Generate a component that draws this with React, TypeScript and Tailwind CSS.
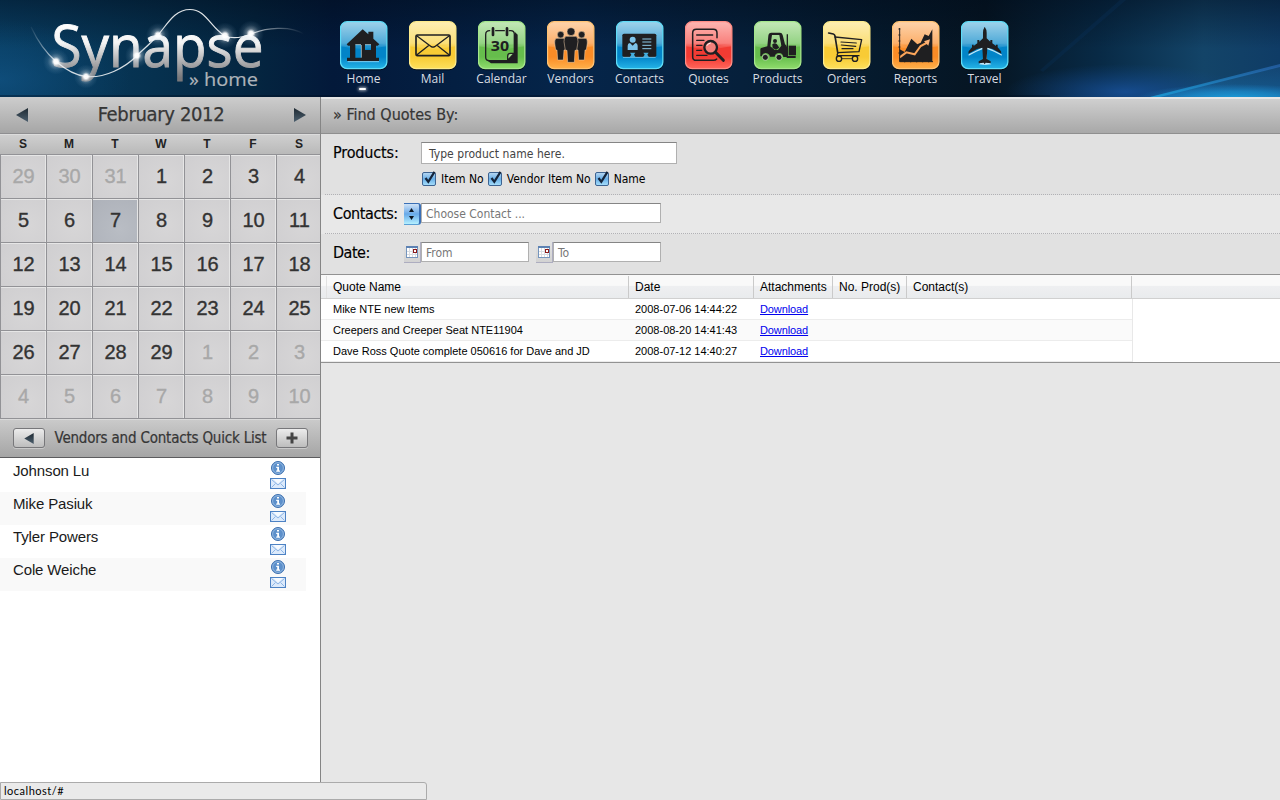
import React from "react";

const INK = "#1f1f21";

type Tone = "blue" | "yellow" | "green" | "orange" | "red";

const TONES: Record<Tone, { edge: string; top: string; mid: string; low: string; end: string }> = {
  blue: { edge: "#5fdcf7", top: "#9fd2ea", mid: "#4faad8", low: "#0284c8", end: "#25b4e6" },
  yellow: { edge: "#fdeb8c", top: "#fdeeb4", mid: "#fbdf78", low: "#f8cb35", end: "#fde05c" },
  green: { edge: "#a5e68c", top: "#c4e8b8", mid: "#94d384", low: "#66bd4c", end: "#8fdc6c" },
  orange: { edge: "#ffc374", top: "#fdd3ab", mid: "#fcb06c", low: "#fb8c26", end: "#ffb04a" },
  red: { edge: "#ff8d86", top: "#fdb6b2", mid: "#f9807c", low: "#f23b33", end: "#ff655a" },
};

function Tile({ tone, x0, children }: { tone: Tone; x0: number; children: React.ReactNode }) {
  const t = TONES[tone];
  const id = "tile" + x0;
  return (
    <svg width="48" height="50" viewBox="0 0 144 150" className="ml-[11px] block">
      <defs>
        <linearGradient id={id} x1="0" y1="0" x2="0" y2="1">
          <stop offset="0" stopColor={t.top} />
          <stop offset="0.46" stopColor={t.mid} />
          <stop offset="0.54" stopColor={t.low} />
          <stop offset="0.75" stopColor={t.low} />
          <stop offset="1" stopColor={t.end} />
        </linearGradient>
      </defs>
      <rect x="1" y="4" width="141" height="144" rx="22" fill="#000" opacity=".6" />
      <rect x="1.5" y="2" width="139" height="141" rx="20" fill={`url(#${id})`} stroke={t.edge} strokeWidth="4" />
      <path d="M4 68Q71 84 138 68L138 76Q71 92 4 76Z" fill={t.mid} opacity=".35" />
      <g transform={`translate(${-x0} -34)`} fill={INK}>
        {children}
      </g>
    </svg>
  );
}

const line = { fill: "none", stroke: INK, strokeLinecap: "round" as const, strokeLinejoin: "round" as const };

const NAV: { label: string; tone: Tone; x0: number; active?: boolean; art: React.ReactNode }[] = [
  {
    label: "Home", tone: "blue", x0: 30, active: true,
    art: (
      <>
        <path d="M53 156H147" stroke="#b9e6f8" strokeWidth="2" />
        <path fillRule="evenodd" d="M98 59L115 74V66H130V87L148 104L143 108H138V144H147V154H51V144H60V108H54L50 104ZM76 105V144H93V105ZM105 105V121H123V105Z" />
        <path d="M76 105H93M105 105H123M94 106V144" stroke="#d6f1fc" strokeWidth="2" fill="none" />
      </>
    ),
  },
  {
    label: "Mail", tone: "yellow", x0: 236,
    art: (
      <g {...line} strokeWidth="5">
        <rect x="257" y="76" width="102" height="62" rx="4" />
        <path d="M260 79L303 111Q308 114 313 111L356 79M260 135L296 107M356 135L320 107" strokeWidth="4" />
      </g>
    ),
  },
  {
    label: "Calendar", tone: "green", x0: 443,
    art: (
      <>
        <path d="M553 66L562 75V161H482L468 151H530L553 130Z" />
        <path {...line} strokeWidth="4" d="M478 63Q466 63 466 75V143Q466 153 477 153H532L552 132V74Q552 63 541 63H537M496 63H522" />
        <path d="M552 131H540Q532 131 532 140V152Z" fill="#9fd98b" stroke={INK} strokeWidth="4" />
        <path {...line} strokeWidth="8" d="M488 56V76M530 56V76" />
        <text x="509" y="124" textAnchor="middle" fontFamily="'Open Sans', 'Noto Sans', sans-serif" fontWeight="700" fontSize="43" textLength="55" lengthAdjust="spacingAndGlyphs">30</text>
      </>
    ),
  },
  {
    label: "Vendors", tone: "orange", x0: 19,
    art: (
      <g stroke="#f8d7ae" strokeWidth="1.5">
        <circle cx="60" cy="75" r="10" />
        <path d="M48 86H72Q78 88 77 100L74 121H70L68 151H51L49 121H45L42 100Q41 88 48 86Z" />
        <circle cx="123" cy="75" r="10" />
        <path d="M111 86H135Q141 88 140 100L137 121H133L131 151H114L112 121H108L105 100Q104 88 111 86Z" />
        <circle cx="91" cy="66" r="12" />
        <path d="M77 80H105Q113 82 112 96L108 122H103L101 158H81L79 122H74L70 96Q69 82 77 80Z" />
      </g>
    ),
  },
  {
    label: "Contacts", tone: "blue", x0: 227,
    art: (
      <>
        <rect x="246" y="72" width="102" height="70" rx="5" />
        <path d="M248 143H346" stroke="#a8dcf3" strokeWidth="2" />
        <g fill="#7ec4ea">
          <circle cx="277" cy="90" r="9" />
          <path d="M262 121V108Q262 101 269 100L277 108L285 100Q292 101 292 108V121Z" />
        </g>
        <path fill="#45aede" d="M269 129H285L281 135L286 143H268L273 135ZM309 129H325L321 135L326 143H308L313 135Z" />
        <path d="M306 88H333M306 97H333M306 107H333M306 117H333" stroke="#8dc9e8" strokeWidth="3" />
      </>
    ),
  },
  {
    label: "Quotes", tone: "red", x0: 434,
    art: (
      <>
        <path {...line} strokeWidth="4.5" d="M530 84V70Q530 59 519 59H468Q457 59 457 70V141Q457 152 468 152H519Q526 152 529 148" />
        <path {...line} strokeWidth="4" d="M469 76H517M469 92H491M469 107H485M469 122H484M469 137H500" />
        <circle cx="511" cy="113" r="19" fill="#f5827c" stroke={INK} strokeWidth="7" />
        <path {...line} strokeWidth="9" d="M527 129L549 152" />
        <path d="M500 108Q503 101 511 100" fill="none" stroke="#fff" strokeWidth="3" />
      </>
    ),
  },
  {
    label: "Products", tone: "green", x0: 26,
    art: (
      <>
        <path fillRule="evenodd" d="M78 69H104Q110 69 112 76L119 104Q124 107 124 112V74H128V139H151V145H124V142H114Q112 130 101 130Q90 130 88 141H74Q71 130 60 130Q51 131 49 140H45V119Q45 115 50 114L66 110L69 78Q70 69 78 69ZM80 76L75 110L88 121H98L108 108L102 76Z" />
        <circle cx="89" cy="94" r="6" />
        <path d="M81 104Q89 98 95 104L102 114L92 120L82 115Z" />
        <rect x="130" y="108" width="22" height="29" />
        <circle cx="60" cy="143" r="9" stroke="#d3efc9" strokeWidth="2" />
        <circle cx="101" cy="143" r="9" stroke="#d3efc9" strokeWidth="2" />
      </>
    ),
  },
  {
    label: "Orders", tone: "yellow", x0: 233,
    art: (
      <g {...line} strokeWidth="4">
        <path strokeWidth="5" d="M250 70L264 73Q268 74 269 79L277 128" />
        <path d="M269 82L349 90L341 126L277 129M279 129Q274 133 276 138H341" />
        <path strokeWidth="3.5" d="M287 97L333 100M288 106L331 110M290 117H323" />
        <circle cx="281" cy="147" r="8" />
        <circle cx="329" cy="147" r="8" />
        <path d="M289 147H320" strokeWidth="2.5" />
      </g>
    ),
  },
  {
    label: "Reports", tone: "orange", x0: 440,
    art: (
      <>
        <path d="M463 119L478 127L498 87L516 104L526 99L538 74L550 79L561 59V156H463Z" />
        <path d="M463 143L483 128L508 134L526 109L549 97" fill="none" stroke="#fca55a" strokeWidth="6" />
        <path d="M536 95L554 89L549 108Z" fill="#fcb277" />
        <path d="M463 55V156H563" fill="none" stroke={INK} strokeWidth="3" />
        <path d="M459 58H465M459 76H465M459 94H465M459 112H465M459 130H465M478 158V153M496 158V153M514 158V153M532 158V153M550 158V153" stroke={INK} strokeWidth="2.5" />
      </>
    ),
  },
  {
    label: "Travel", tone: "blue", x0: 647,
    art: (
      <>
        <path transform="translate(1 4)" fill="#bfe6f7" d="M718 112L745 122L768 134V130L724 108L724 148L737 160L718 162L700 160L713 148V108L669 130V134L692 122Z" />
        <path d="M718 51Q724 59 724 69V86L735 96V91H741V101L752 109V105H757V113L767 125L768 132L742 118L726 114L724 148L736 155V161L721 159L718 164L715 159L700 161V155L713 148L711 114L695 118L669 132L670 125L680 113V105H685V109L696 101V91H702V96L713 86V69Q713 59 718 51Z" />
      </>
    ),
  },
];

function HeaderArt() {
  return (
    <svg className="absolute inset-0" width="1280" height="97" viewBox="0 0 1280 97">
      <defs>
        <linearGradient id="base" x1="0" x2="1" y1="0" y2="0">
          <stop offset="0" stopColor="#093f64" />
          <stop offset="0.12" stopColor="#06314f" />
          <stop offset="0.2" stopColor="#042540" />
          <stop offset="0.26" stopColor="#03193a" />
          <stop offset="0.45" stopColor="#05254a" />
          <stop offset="0.58" stopColor="#06203b" />
          <stop offset="0.7" stopColor="#05192b" />
          <stop offset="0.77" stopColor="#061522" />
          <stop offset="0.86" stopColor="#082a46" />
          <stop offset="0.94" stopColor="#134468" />
          <stop offset="1" stopColor="#0f3c66" />
        </linearGradient>
        <linearGradient id="shade" x1="0" x2="0" y1="0" y2="1">
          <stop offset="0" stopColor="#000a18" stopOpacity=".45" />
          <stop offset="0.5" stopColor="#000a18" stopOpacity="0" />
        </linearGradient>
        <radialGradient id="glowBlue"><stop offset="0" stopColor="#1a55a4" stopOpacity=".75" /><stop offset="1" stopColor="#124a90" stopOpacity="0" /></radialGradient>
        <radialGradient id="glowCyan"><stop offset="0" stopColor="#1ba0dc" /><stop offset="0.5" stopColor="#1b8fd0" stopOpacity=".7" /><stop offset="1" stopColor="#1a80c8" stopOpacity="0" /></radialGradient>
        <radialGradient id="glowLeft"><stop offset="0" stopColor="#13588c" stopOpacity=".55" /><stop offset="1" stopColor="#0d4d7c" stopOpacity="0" /></radialGradient>
        <linearGradient id="ray" x1="0" x2="1"><stop offset="0" stopColor="#1aa4dc" /><stop offset="1" stopColor="#2a68b4" stopOpacity=".9" /></linearGradient>
        <linearGradient id="underRay" x1="0" x2="0" y1="0" y2="1"><stop offset="0" stopColor="#1d5c92" stopOpacity=".3" /><stop offset="1" stopColor="#1a78b8" stopOpacity=".5" /></linearGradient>
        <linearGradient id="metal" x1="0" x2="0" y1="24" y2="78" gradientUnits="userSpaceOnUse">
          <stop offset="0" stopColor="#ffffff" />
          <stop offset="0.35" stopColor="#f4f4f4" />
          <stop offset="0.75" stopColor="#a4a4a6" />
          <stop offset="1" stopColor="#77777a" />
        </linearGradient>
        <linearGradient id="wire" x1="31" x2="304" y1="0" y2="0" gradientUnits="userSpaceOnUse">
          <stop offset="0" stopColor="#fff" stopOpacity=".05" />
          <stop offset="0.09" stopColor="#fff" stopOpacity=".8" />
          <stop offset="0.8" stopColor="#fff" stopOpacity=".9" />
          <stop offset="0.86" stopColor="#fff" stopOpacity=".5" />
          <stop offset="1" stopColor="#fff" stopOpacity="0" />
        </linearGradient>
        <radialGradient id="spark">
          <stop offset="0" stopColor="#fff" />
          <stop offset="0.18" stopColor="#fff" stopOpacity=".95" />
          <stop offset="0.36" stopColor="#e4edf4" stopOpacity=".38" />
          <stop offset="0.65" stopColor="#b8d0e2" stopOpacity=".13" />
          <stop offset="1" stopColor="#9cc8e8" stopOpacity="0" />
        </radialGradient>
      </defs>
      <rect width="1280" height="97" fill="url(#base)" />
      <rect width="1280" height="97" fill="url(#shade)" />
      <ellipse cx="0" cy="80" rx="130" ry="60" fill="url(#glowLeft)" />
      <ellipse cx="1125" cy="92" rx="120" ry="28" fill="url(#glowBlue)" />
      <path d="M1150 97L1280 66V97Z" fill="url(#underRay)" />
      <ellipse cx="1235" cy="99" rx="100" ry="15" fill="url(#glowCyan)" />
      <path d="M1150 97L1280 64V67L1160 97Z" fill="url(#ray)" opacity=".75" />
      <path d="M1040 70L1120 0H1126L1043 72Z" fill="#0e4080" opacity=".15" />
      <path d="M0 96H1050" stroke="#000c1c" strokeOpacity=".35" strokeWidth="2" />
      <text x="51.5" y="66.5" fontFamily="'Open Sans', sans-serif" fontSize="58" fill="url(#metal)" stroke="url(#metal)" strokeWidth=".9" textLength="212" lengthAdjust="spacingAndGlyphs">Synapse</text>
      <text x="189" y="86" fontFamily="'Open Sans', sans-serif" fontSize="19" fill="#adb3b9" stroke="#adb3b9" strokeWidth=".2" textLength="69" lengthAdjust="spacingAndGlyphs">» home</text>
      <path
        d="M31 27C38 42 45 52 56 61.5C66 70 76 75.5 86 76.5C104 78.5 125 68 137 55.5C146 47 152 42 158 35C167 25 174 9.5 190 9.5C206 9.5 210 27 225 36C235 40 246 36 251 34C265 28 290 25 304 34"
        fill="none" stroke="url(#wire)" strokeWidth="1.2"
      />
      {[[56, 61.5, 13], [86, 76.5, 12], [137, 55.5, 12], [158, 35, 12], [225, 35.5, 13], [251, 33.5, 13]].map(([x, y, r]) => (
        <circle key={x} cx={x} cy={y} r={r} fill="url(#spark)" />
      ))}
    </svg>
  );
}

function Header() {
  return (
    <header className="relative h-[97px] shrink-0 overflow-hidden">
      <HeaderArt />
      <nav className="relative ml-[329px] flex pt-[21px]">
        {NAV.map((n) => (
          <a key={n.label} className="w-[69px] shrink-0">
            <Tile tone={n.tone} x0={n.x0}>{n.art}</Tile>
            <span className="block text-center font-['Open_Sans'] text-[12px] leading-4 text-[#d9dde2]">{n.label}</span>
            {n.active && (
              <span className="mx-auto mt-px -translate-x-px block h-[2px] w-[7px] rounded-full bg-white shadow-[0_0_3px_1px_rgba(255,255,255,0.6)]" />
            )}
          </a>
        ))}
      </nav>
    </header>
  );
}

const TAHOMA = "font-['DejaVu_Sans_Condensed','DejaVu_Sans',sans-serif] [font-stretch:condensed]";

function Arrow({ dir, className }: { dir: "left" | "right"; className?: string }) {
  return (
    <svg width="12" height="14" viewBox="0 0 12 14" className={className}>
      <defs>
        <linearGradient id={"arrow" + dir} x1="0" x2="0" y1="0" y2="1">
          <stop offset="0" stopColor="#1f2a33" />
          <stop offset="1" stopColor="#4c5f6e" />
        </linearGradient>
      </defs>
      <path d={dir === "left" ? "M12 0V14L0 7Z" : "M0 0V14L12 7Z"} fill={`url(#arrow${dir})`} />
    </svg>
  );
}

const DAYS = [29, 30, 31, ...Array.from({ length: 29 }, (_, i) => i + 1), ...Array.from({ length: 10 }, (_, i) => i + 1)];

function Calendar() {
  return (
    <section>
      <div className="flex h-[37px] items-center justify-between border-b border-[#8f8f91] bg-linear-to-b from-[#cdcdcd] to-[#a6a6a6] pr-[14px] pl-4">
        <Arrow dir="left" />
        <h2 className={`${TAHOMA} -mt-0.5 text-[20px] tracking-[-0.35px] text-[#363636] [-webkit-text-stroke:0.25px]`}>February 2012</h2>
        <Arrow dir="right" />
      </div>
      <div className="w-[320px] overflow-hidden">
        <div className="grid h-5 w-[322px] grid-cols-7 border-t border-[#dcdcdc] bg-linear-to-b from-[#cfcfcf] to-[#b9b9b9]">
          {["S", "M", "T", "W", "T", "F", "S"].map((d, i) => (
            <span key={i} className="text-center text-[12px] leading-[18px] font-bold text-[#222]">{d}</span>
          ))}
        </div>
        <div className="grid w-[322px] grid-cols-7">
          {DAYS.map((d, i) => {
            const other = i < 3 || i > 31;
            const today = i === 9;
            return (
              <div
                key={i}
                className={`flex h-11 items-center justify-center border-t border-l border-[#929296] pb-[2px] text-[20px] shadow-[inset_-1px_1px_0_#e6e6e6] [-webkit-text-stroke:0.35px] ${
                  today ? "bg-[radial-gradient(circle_at_60%_70%,#b9bdc4,#adb1b9)]" : "bg-[radial-gradient(circle_at_60%_60%,#d7d6d7,#cfced0)]"
                } ${other ? "text-[#a8a8a8]" : "text-[#333]"}`}
              >
                {d}
              </div>
            );
          })}
        </div>
      </div>
    </section>
  );
}

function InfoIcon() {
  return (
    <svg width="14" height="14" viewBox="0 0 14 14">
      <circle cx="7" cy="7" r="6.5" fill="#5d90cb" stroke="#3d6fae" />
      <circle cx="7" cy="7" r="5.4" fill="none" stroke="#a9c8ea" strokeWidth=".7" />
      <path d="M6 3H8V4.6H6ZM5.2 5.8H8V9.6H9V10.8H5.2V9.6H6.2V7H5.2Z" fill="#fff" />
    </svg>
  );
}

function EnvelopeIcon() {
  return (
    <svg width="16" height="11" viewBox="0 0 16 11">
      <rect x=".5" y=".5" width="15" height="10" fill="#dceafb" stroke="#4d82c4" />
      <path d="M1.5 1.5L8 7L14.5 1.5M1.5 9.5L5.5 5.5M14.5 9.5L10.5 5.5" fill="none" stroke="#8db5e6" />
      <path d="M3 1H13L8 5.6Z" fill="#f6faff" />
    </svg>
  );
}

const BUTTON = "flex h-5 w-8 items-center justify-center rounded-[3px] border border-[#77777a] bg-linear-to-b from-[#ececec] to-[#bdbdbd] shadow-[0_1px_0_#c9c9c9]";

function QuickList() {
  return (
    <section className="flex min-h-0 flex-1 flex-col bg-white">
      <div className="flex h-10 shrink-0 items-center justify-between border-t border-b border-t-[#929296] border-b-[#5c5c5e] bg-linear-to-b from-[#cbcbcb] to-[#a5a5a5] pr-3 pl-[13px] shadow-[inset_0_1px_0_#dadada]">
        <button className={BUTTON}><Arrow dir="left" className="h-[11px] w-[10px]" /></button>
        <h3 className={`${TAHOMA} text-[15px] tracking-[-0.2px] whitespace-nowrap text-[#363636] [-webkit-text-stroke:0.2px]`}>Vendors and Contacts Quick List</h3>
        <button className={BUTTON}>
          <svg width="12" height="12" viewBox="0 0 12 12"><path d="M6 .5V11.5M.5 6H11.5" stroke="#444" strokeWidth="3" /></svg>
        </button>
      </div>
      <ul className="w-[306px] pt-px">
        {["Johnson Lu", "Mike Pasiuk", "Tyler Powers", "Cole Weiche"].map((name) => (
          <li key={name} className="flex h-[33px] justify-between pr-5 pl-[13px] even:bg-[#f9f9f9]">
            <span className="pt-0.5 text-[15px] leading-5 tracking-[-0.13px] text-[#1a1a1a]">{name}</span>
            <span className="flex flex-col items-center gap-[3px] pt-[2px]">
              <InfoIcon />
              <EnvelopeIcon />
            </span>
          </li>
        ))}
      </ul>
    </section>
  );
}

function Check({ label }: { label: string }) {
  return (
    <label className="flex items-center">
      <svg width="15" height="16" viewBox="0 0 15 16">
        <defs>
          <linearGradient id="chk" x1="0" x2="0" y1="0" y2="1">
            <stop offset="0" stopColor="#b9d8f2" /><stop offset=".5" stopColor="#6ab0e8" /><stop offset="1" stopColor="#a8e0fb" />
          </linearGradient>
        </defs>
        <rect x=".5" y="1.5" width="13" height="13" rx="1.5" fill="url(#chk)" stroke="#3d6391" />
        <path d="M3.5 7L6.3 10.8L12.5 .8" fill="none" stroke="#15243a" strokeWidth="2.2" />
      </svg>
      <span className={`${TAHOMA} ml-1 text-[12px] text-black`}>{label}</span>
    </label>
  );
}

function Field({ text, className }: { text: string; className: string }) {
  return (
    <div className={`${TAHOMA} border border-[#b0b0b0] border-t-[#858585] bg-white text-[12px] ${className}`}>{text}</div>
  );
}

function DateButton() {
  return (
    <button className="flex h-[21px] w-[17px] justify-center border-r border-b border-[#adadc0] bg-linear-to-b from-[#e4e4e4] to-[#d2d2d2] pt-1">
      <svg width="12" height="12" viewBox="0 0 12 12">
        <rect x=".5" y=".5" width="11" height="11" fill="#fff" stroke="#7595bd" />
        <path d="M0 1H12" stroke="#5d82b3" strokeWidth="2" />
        <path d="M3.5 2V11M6.5 2V11M9.5 2V11M1 5.5H11M1 8.5H11" stroke="#d9dde2" />
        <rect x="7.5" y="3.5" width="3" height="3" fill="#fff" stroke="#8b1a1a" />
      </svg>
    </button>
  );
}

const LABEL = `${TAHOMA} shrink-0 pt-px pl-3 text-[16px] leading-5 text-black [-webkit-text-stroke:0.15px]`;
const DIVIDER = "ml-1 border-b border-dotted border-[#b1b1b5]";

function Filters() {
  return (
    <>
      <div className="h-[37px] shrink-0 border-t-2 border-b border-t-[#e6e6e6] border-b-[#8f8f8f] bg-linear-to-b from-[#cfcfcf] to-[#a8a8a8] pl-3">
        <h2 className={`${TAHOMA} pt-[6px] text-[16px] leading-5 text-[#363636] [-webkit-text-stroke:0.2px]`}>» Find Quotes By:</h2>
      </div>
      <div className="h-[60px] bg-[#e1e1e1] pt-2">
        <div className="flex">
          <span className={`${LABEL} w-[100px] tracking-[-0.15px]`}>Products:</span>
          <Field text="Type product name here." className="h-[22px] w-[256px] pl-[7px] leading-[23px] tracking-[0.05px] text-[#444]" />
        </div>
        <div className="mt-[6px] ml-[101px] flex gap-1">
          <Check label="Item No" />
          <Check label="Vendor Item No" />
          <Check label="Name" />
        </div>
      </div>
      <div className="bg-[#e1e1e1]"><div className={DIVIDER} /></div>
      <div className="flex h-[38px] bg-[#e8e8e8] pt-2">
        <span className={`${LABEL} w-[83px] tracking-[-0.4px]`}>Contacts:</span>
        <button className="flex h-[22px] w-[17px] items-center justify-center rounded-r-[3px] border-y border-r-2 border-[#3a6fb5] border-b-[#5b9fd4] bg-linear-to-b from-[#cfe2f6] via-[#68a9e8] to-[#b5f0ff]">
          <svg width="7" height="14" viewBox="0 0 7 14"><path d="M3.5 1L6 5H1ZM3.5 13L6 9H1Z" fill="#0c1420" /></svg>
        </button>
        <Field text="Choose Contact ..." className="h-5 w-[240px] pl-1 leading-[20px] text-[#777]" />
      </div>
      <div className="bg-[#e8e8e8]"><div className={DIVIDER} /></div>
      <div className="flex h-[41px] border-b border-[#929292] bg-[#e1e1e1] pt-2">
        <span className={`${LABEL} w-[83px] tracking-[-0.5px]`}>Date:</span>
        <DateButton />
        <Field text="From" className="h-5 w-[108px] pl-1 leading-[20px] text-[#777]" />
        <span className="w-[7px]" />
        <DateButton />
        <Field text="To" className="h-5 w-[108px] pl-1 leading-[20px] text-[#777]" />
      </div>
    </>
  );
}

const HEADS: [string, string][] = [
  ["Quote Name", "w-[302px]"],
  ["Date", "w-[125px]"],
  ["Attachments", "w-[79px]"],
  ["No. Prod(s)", "w-[74px]"],
  ["Contact(s)", "w-[225px]"],
];

const ROWS = [
  ["Mike NTE new Items", "2008-07-06 14:44:22"],
  ["Creepers and Creeper Seat NTE11904", "2008-08-20 14:41:43"],
  ["Dave Ross Quote complete 050616 for Dave and JD", "2008-07-12 14:40:27"],
];

function Quotes() {
  return (
    <div className="border-b border-[#929292] bg-white">
      <div className="flex h-6 border-b border-[#d0d0d0] bg-[linear-gradient(#f9f9f9_0%,#f9f9f9_45%,#eeeff1_50%,#e9ebed_100%)] pt-px">
        <span className="w-[6px] border-r border-[#e2e2e2]" />
        {HEADS.map(([h, w]) => (
          <span key={h} className={`border-r border-[#cacaca] pl-[6px] text-[12px] leading-[22px] whitespace-nowrap text-black ${w}`}>
            {h}
          </span>
        ))}
      </div>
      {ROWS.map(([name, date]) => (
        <div key={name} className="w-[812px] border-r border-[#e8e8e8]">
          <div className={`grid h-[21px] grid-cols-[302px_125px_79px_1fr] border-b border-[#ececec] pl-[6px] text-[11px] leading-[20px] text-black ${name.startsWith("Creepers") ? "bg-[#fafafa]" : ""}`}>
            <span className="pl-[6px]">{name}</span>
            <span className="pl-[6px]">{date}</span>
            <a className="pl-[6px] tracking-[-0.1px] text-[#0000ee] underline">Download</a>
          </div>
        </div>
      ))}
    </div>
  );
}

export default function App() {
  return (
    <div className="relative flex h-[800px] w-[1280px] flex-col overflow-hidden bg-[#e7e7e7] font-['Liberation_Sans',Arial,sans-serif]">
      <Header />
      <div className="flex min-h-0 flex-1">
        <aside className="flex w-[321px] shrink-0 flex-col border-r border-[#858585]">
          <Calendar />
          <QuickList />
        </aside>
        <main className="min-w-0 flex-1">
          <Filters />
          <Quotes />
        </main>
      </div>
      <div className="absolute bottom-0 left-0 h-[18px] w-[427px] rounded-tr-[3px] border border-[#ababab] bg-[#eaeaea] pl-[3px] font-['Lato','Open_Sans',sans-serif] text-[11px] leading-[16px] tracking-[0.5px] text-black">
        localhost/#
      </div>
    </div>
  );
}
